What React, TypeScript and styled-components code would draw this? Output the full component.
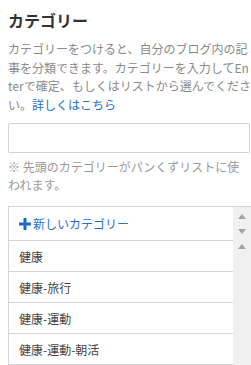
import React from "react";
import styled, { createGlobalStyle } from "styled-components";

const Global = createGlobalStyle`
  html, body { margin: 0; padding: 0; background: #fff; overflow: hidden; }
  body { font-family: "Noto Sans CJK JP", "Noto Sans", sans-serif; }
`;

const Panel = styled.div`
  width: 243px;
  padding: 8px 0 0 8px;
  display: flex;
  flex-direction: column;
`;

const Title = styled.h2`
  margin: 0;
  font-size: 16px;
  line-height: 24px;
  font-weight: 700;
  color: #333;
`;

const Desc = styled.p`
  margin: 8px 0 0;
  font-size: 12px;
  line-height: 18.5px;
  color: #8a8a8a;
  white-space: nowrap;
`;

const Link = styled.a`
  color: #1f6fd0;
  text-decoration: none;
`;

const Input = styled.input`
  box-sizing: border-box;
  width: 242px;
  height: 30px;
  margin-top: 9px;
  border: 1px solid #d3d3d8;
  border-radius: 2px;
  outline: none;
  font-size: 12px;
`;

const Note = styled.p`
  margin: 5px 0 0;
  font-size: 12px;
  line-height: 18px;
  color: #999;
  white-space: nowrap;
`;

const ListBox = styled.div`
  margin-top: 12px;
  display: flex;
  border-top: 1px solid #d5d5dd;
  border-left: 1px solid #d5d5dd;
  height: 159px;
  overflow: hidden;
`;

const Rows = styled.div`
  flex: 1;
  display: flex;
  flex-direction: column;
`;

const Row = styled.div<{ $first?: boolean }>`
  height: ${(p) => (p.$first ? 33 : 30)}px;
  flex: none;
  display: flex;
  align-items: center;
  gap: 2px;
  padding-left: 10px;
  border-bottom: 1px solid #d5d5dd;
  font-size: 12px;
  color: ${(p) => (p.$first ? "#1f6fd0" : "#444")};
`;

const Scroll = styled.div`
  width: 18px;
  background: #f0f0f0;
  display: flex;
  flex-direction: column;
  align-items: center;
  padding-top: 7px;
  gap: 10px;
`;

const Arrow = ({ down }: { down?: boolean }) => (
  <svg width="8" height="5" viewBox="0 0 8 5">
    <polygon points={down ? "0,0 8,0 4,5" : "0,5 8,5 4,0"} fill="#a3a3a3" />
  </svg>
);

const PlusIcon = () => (
  <svg width="12" height="12" viewBox="0 0 12 12">
    <rect x="4.5" y="0" width="3" height="12" fill="#1a6bc8" />
    <rect x="0" y="4.5" width="12" height="3" fill="#1a6bc8" />
  </svg>
);

const items = ["健康", "健康-旅行", "健康-運動", "健康-運動-朝活"];

export default function App() {
  return (
    <>
      <Global />
      <Panel>
        <Title>カテゴリー</Title>
        <Desc>
          カテゴリーをつけると、自分のブログ内の記
          <br />
          事を分類できます。カテゴリーを入力してEn
          <br />
          terで確定、もしくはリストから選んでくださ
          <br />
          い。<Link href="#">詳しくはこちら</Link>
        </Desc>
        <Input type="text" />
        <Note>
          ※ 先頭のカテゴリーがパンくずリストに使
          <br />
          われます。
        </Note>
        <ListBox>
          <Rows>
            <Row $first>
              <PlusIcon />
              新しいカテゴリー
            </Row>
            {items.map((t) => (
              <Row key={t}>{t}</Row>
            ))}
          </Rows>
          <Scroll>
            <Arrow />
            <Arrow down />
            <Arrow />
          </Scroll>
        </ListBox>
      </Panel>
    </>
  );
}
